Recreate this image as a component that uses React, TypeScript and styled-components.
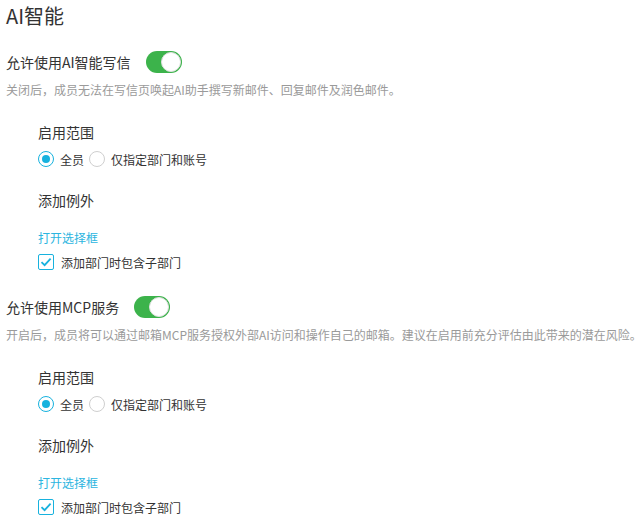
import { useState } from "react";
import styled, { createGlobalStyle } from "styled-components";

const GlobalStyle = createGlobalStyle`
  body {
    margin: 0;
    background: #fff;
    font-family: "Noto Sans CJK SC", "Noto Sans", sans-serif;
    color: #333;
  }
`;

const Page = styled.div`
  padding: 0 6px;
`;

const Title = styled.h1`
  margin: 0;
  font-size: 20px;
  font-weight: normal;
  line-height: 32px;
  color: #333;
`;

const Section = styled.div`
  padding-top: 18px;
  & + & {
    padding-top: 23px;
  }
`;

const SwitchRow = styled.div`
  display: flex;
  align-items: center;
  height: 24px;
  font-size: 14px;
`;

const Track = styled.button<{ $on: boolean }>`
  position: relative;
  margin-left: 15px;
  width: 36px;
  height: 22px;
  padding: 0;
  border: none;
  border-radius: 11px;
  background-color: ${(p) => (p.$on ? "#3cb34b" : "#ccc")};
  cursor: pointer;
`;

const Knob = styled.span<{ $on: boolean }>`
  position: absolute;
  top: 1px;
  left: ${(p) => (p.$on ? "15px" : "1px")};
  width: 20px;
  height: 20px;
  box-sizing: border-box;
  border-radius: 50%;
  background: #fff;
  border: 1px solid #e0e0e0;
`;

const Desc = styled.p`
  margin: 6px 0 0;
  font-size: 12px;
  line-height: 20px;
  color: #9a9a9a;
  white-space: nowrap;
`;

const Scope = styled.div`
  padding-left: 32px;
  padding-top: 21px;
`;

const Label = styled.div`
  font-size: 14px;
  line-height: 22px;
  color: #333;
`;

const RadioGroup = styled.div`
  display: flex;
  align-items: center;
  gap: 5px;
  margin-top: 5px;
  height: 22px;
  margin-bottom: 19px;
`;

const RadioItem = styled.label`
  display: flex;
  align-items: center;
  gap: 6px;
  font-size: 12px;
  cursor: pointer;
`;

const RadioDot = styled.span<{ $checked: boolean }>`
  display: inline-flex;
  align-items: center;
  justify-content: center;
  width: 16px;
  height: 16px;
  box-sizing: border-box;
  border-radius: 50%;
  border: 1px solid ${(p) => (p.$checked ? "#17b2de" : "#cfcfcf")};
  &::after {
    content: "";
    width: 8px;
    height: 8px;
    border-radius: 50%;
    background: ${(p) => (p.$checked ? "#17b2de" : "transparent")};
  }
`;

const Link = styled.a`
  display: block;
  margin-top: 17px;
  font-size: 12px;
  line-height: 20px;
  color: #2cb5e0;
  cursor: pointer;
`;

const CheckRow = styled.label`
  display: flex;
  align-items: center;
  gap: 7px;
  margin-top: 4px;
  height: 20px;
  font-size: 12px;
  color: #333;
  cursor: pointer;
`;

const CheckBox = styled.span`
  display: inline-flex;
  align-items: center;
  justify-content: center;
  width: 16px;
  height: 16px;
  box-sizing: border-box;
  border: 1px solid #17b2de;
  border-radius: 2px;
`;

interface ISetting {
  title: string;
  desc: string;
}

const settings: ISetting[] = [
  {
    title: "允许使用AI智能写信",
    desc: "关闭后，成员无法在写信页唤起AI助手撰写新邮件、回复邮件及润色邮件。",
  },
  {
    title: "允许使用MCP服务",
    desc: "开启后，成员将可以通过邮箱MCP服务授权外部AI访问和操作自己的邮箱。建议在启用前充分评估由此带来的潜在风险。",
  },
];

function SettingBlock({ title, desc }: ISetting) {
  const [on, setOn] = useState(true);
  const [scope, setScope] = useState("all");
  return (
    <Section>
      <SwitchRow>
        {title}
        <Track $on={on} onClick={() => setOn((c) => !c)}>
          <Knob $on={on} />
        </Track>
      </SwitchRow>
      <Desc>{desc}</Desc>
      <Scope>
        <Label>启用范围</Label>
        <RadioGroup>
          <RadioItem onClick={() => setScope("all")}>
            <RadioDot $checked={scope === "all"} />
            全员
          </RadioItem>
          <RadioItem onClick={() => setScope("some")}>
            <RadioDot $checked={scope === "some"} />
            仅指定部门和账号
          </RadioItem>
        </RadioGroup>
        <Label>添加例外</Label>
        <Link>打开选择框</Link>
        <CheckRow>
          <CheckBox>
            <svg width="12" height="12" viewBox="0 0 12 12">
              <path
                d="M1.5 6.2 L4.6 9.2 L10.6 2.6"
                fill="none"
                stroke="#17b2de"
                strokeWidth="1.8"
              />
            </svg>
          </CheckBox>
          添加部门时包含子部门
        </CheckRow>
      </Scope>
    </Section>
  );
}

function App() {
  return (
    <>
      <GlobalStyle />
      <Page>
        <Title>AI智能</Title>
        {settings.map((s) => (
          <SettingBlock key={s.title} {...s} />
        ))}
      </Page>
    </>
  );
}

export default App;
